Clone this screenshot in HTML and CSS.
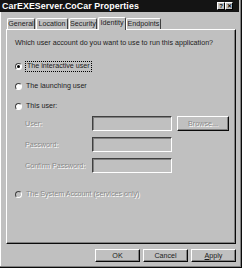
FILE: index.html
```html
<!DOCTYPE html>
<html lang="en">
<head>
  <meta charset="UTF-8">
  <title>CarEXEServer.CoCar Properties</title>
  <link rel="stylesheet" href="styles.css">
</head>
<body>

  <div class="window">

    <!-- TITLE BAR -->
    <div class="titlebar">
      <span class="title">CarEXEServer.CoCar Properties</span>
      <div class="title-buttons">
        <span class="tbtn">?</span>
        <span class="tbtn">✕</span>
      </div>
    </div>

    <!-- TABS -->
    <div class="tabs">
      <div class="tab tab-general">General</div>
      <div class="tab tab-location">Location</div>
      <div class="tab tab-security">Security</div>
      <div class="tab tab-identity active">Identity</div>
      <div class="tab tab-endpoints">Endpoints</div>
    </div>

    <!-- IDENTITY PAGE -->
    <div class="panel">
      <p class="question">Which user account do you want to use to run this application?</p>

      <div class="radio first">
        <span class="dot checked"></span>
        <span class="focus">The interactive user</span>
      </div>
      <div class="radio">
        <span class="dot"></span>
        <span>The launching user</span>
      </div>
      <div class="radio">
        <span class="dot"></span>
        <span>This user:</span>
      </div>

      <div class="fields">
        <div class="field">
          <span class="lbl">User:</span>
          <span class="box"></span>
          <span class="btn browse disabled">Browse...</span>
        </div>
        <div class="field">
          <span class="lbl">Password:</span>
          <span class="box"></span>
        </div>
        <div class="field">
          <span class="lbl">Confirm Password:</span>
          <span class="box"></span>
        </div>
      </div>

      <div class="radio system disabled">
        <span class="dot"></span>
        <span>The System Account (services only)</span>
      </div>
    </div>

    <!-- DIALOG BUTTONS -->
    <div class="buttons">
      <span class="btn">OK</span>
      <span class="btn">Cancel</span>
      <span class="btn"><u>A</u>pply</span>
    </div>

  </div>

</body>
</html>
```

FILE: styles.css
```css
body {
  margin: 0;
  padding: 0;
  background: #c0c0c0;
  font-family: "Liberation Sans", Arial, sans-serif;
  font-size: 7.15px;
  color: #1c1c1c;
}

.window {
  width: 242px;
  height: 268px;
  box-sizing: border-box;
  background: #c0c0c0;
  border-right: 1px solid #0a0a0a;
  border-bottom: 1px solid #0a0a0a;
  box-shadow: inset -1px -1px 0 #808080, inset 1px 0 0 #fff;
  display: flex;
  flex-direction: column;
}

/* title bar */
.titlebar {
  height: 12px;
  margin-right: 2px;
  background: #141414;
  display: flex;
  align-items: center;
  justify-content: space-between;
  padding: 0 6px 0 2px;
}

.title {
  color: #fff;
  font-weight: bold;
  font-size: 8.8px;
  letter-spacing: 0.1px;
}

.title-buttons {
  display: flex;
}

.tbtn {
  width: 8px;
  height: 8px;
  box-sizing: border-box;
  background: #c0c0c0;
  border: 1px solid;
  border-color: #fff #000 #000 #fff;
  color: #000;
  font-size: 6px;
  font-weight: bold;
  line-height: 6px;
  text-align: center;
}

/* tabs */
.tabs {
  height: 17px;
  display: flex;
  align-items: flex-end;
  padding-left: 7px;
  gap: 1px;
}

.tab {
  height: 11px;
  box-sizing: border-box;
  border: 1px solid;
  border-color: #fff #404040 transparent #fff;
  border-bottom: none;
  border-radius: 2px 2px 0 0;
  text-align: center;
  line-height: 10px;
  white-space: nowrap;
}

.tab.active {
  height: 13px;
  line-height: 11px;
  position: relative;
  top: 1px;
  background: #c0c0c0;
  z-index: 1;
}

.tab-general { width: 28px; }
.tab-location { width: 32px; }
.tab-security { width: 28px; }
.tab-identity { width: 28px; margin-right: -1px; }
.tab-endpoints { width: 35px; }

/* page */
.panel {
  height: 215px;
  margin: 0 5px 0 6px;
  box-sizing: border-box;
  border: 1px solid;
  border-color: #fff #0a0a0a #0a0a0a #fff;
  box-shadow: inset -1px -1px 0 #808080;
  padding: 0 0 0 8px;
  display: flex;
  flex-direction: column;
}

.question {
  margin: 8px 0 0 0;
  height: 10px;
  line-height: 10px;
}

.radio {
  height: 12px;
  margin-top: 8px;
  display: flex;
  align-items: center;
  gap: 4px;
}

.radio.first {
  margin-top: 12px;
}

.radio.system {
  margin-top: 15px;
}

.dot {
  width: 7px;
  height: 7px;
  box-sizing: border-box;
  border-radius: 50%;
  border: 1px solid;
  border-color: #404040 #fff #fff #404040;
  background: #fff;
  position: relative;
}

.dot.checked::after {
  content: "";
  position: absolute;
  left: 1px;
  top: 1px;
  width: 3px;
  height: 3px;
  border-radius: 50%;
  background: #000;
}

.focus {
  outline: 1px dotted #000;
  outline-offset: 0;
  padding: 0 1px;
  line-height: 9px;
}

.disabled .dot {
  background: #c0c0c0;
}

.disabled,
.lbl {
  color: #8a8a8a;
  text-shadow: 1px 1px 0 #fff;
}

/* account fields */
.fields {
  margin-top: 4px;
  display: flex;
  flex-direction: column;
  gap: 6px;
}

.field {
  height: 15px;
  display: flex;
  align-items: center;
}

.lbl {
  width: 67px;
  padding-left: 10px;
}

.box {
  width: 80px;
  height: 15px;
  box-sizing: border-box;
  border: 1px solid;
  border-color: #404040 #fff #fff #404040;
  box-shadow: inset 1px 1px 0 #808080;
}

.btn {
  height: 13px;
  width: 45px;
  box-sizing: border-box;
  border: 1px solid;
  border-color: #fff #0a0a0a #0a0a0a #fff;
  box-shadow: inset -1px -1px 0 #808080;
  display: flex;
  align-items: center;
  justify-content: center;
}

.btn.browse {
  width: 52px;
  height: 15px;
  margin-left: 5px;
}

/* dialog buttons */
.buttons {
  margin-top: 5px;
  padding-right: 5px;
  display: flex;
  justify-content: flex-end;
  gap: 3px;
}
```
